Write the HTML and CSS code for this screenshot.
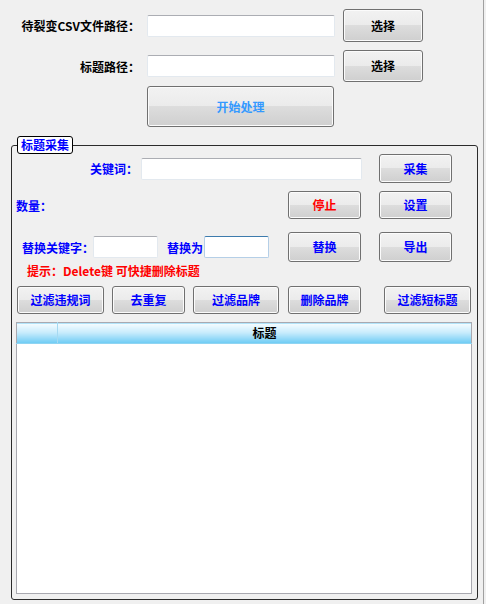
FILE: index.html
```html
<!DOCTYPE html>
<html>

<head>
  <meta charset="utf-8" />
  <title>标题采集</title>
  <link rel="stylesheet" href="styles.css">
</head>

<body>
  <div class="window">
    <div class="top">
      <div class="path-row">
        <label class="path-label">待裂变CSV文件路径：</label>
        <input type="text" class="txt path-input">
        <button class="btn btn-pick">选择</button>
      </div>
      <div class="path-row row2">
        <label class="path-label">标题路径：</label>
        <input type="text" class="txt path-input">
        <button class="btn btn-pick">选择</button>
      </div>
      <div class="start-row">
        <button class="btn btn-start">开始处理</button>
      </div>
    </div>

    <fieldset class="group">
      <legend>标题采集</legend>

      <div class="row row-key">
        <label class="key-label">关键词：</label>
        <input type="text" class="txt key-input">
        <button class="btn btn-sm">采集</button>
      </div>

      <div class="row row-count">
        <span class="count-label">数量：</span>
        <button class="btn btn-sm btn-stop">停止</button>
        <button class="btn btn-sm btn-next">设置</button>
      </div>

      <div class="row row-replace">
        <label class="rep-label">替换关键字：</label>
        <input type="text" class="txt rep-input">
        <label class="rep-to">替换为</label>
        <input type="text" class="txt rep-input focus">
        <button class="btn btn-sm btn-rep">替换</button>
        <button class="btn btn-sm btn-next">导出</button>
      </div>

      <div class="tip">提示：Delete键 可快捷删除标题</div>

      <div class="row row-filter">
        <button class="btn btn-f w87">过滤违规词</button>
        <button class="btn btn-f w73">去重复</button>
        <button class="btn btn-f w86">过滤品牌</button>
        <button class="btn btn-f w73 g9">删除品牌</button>
        <button class="btn btn-f w87 g23">过滤短标题</button>
      </div>

      <table class="grid">
        <thead>
          <tr>
            <th class="col-no"></th>
            <th>标题</th>
          </tr>
        </thead>
        <tbody>
          <tr>
            <td colspan="2"></td>
          </tr>
        </tbody>
      </table>
    </fieldset>
  </div>
</body>

</html>
```

FILE: styles.css
```css
html {
  width: 100%;
  height: 100%;
}

body {
  margin: 0;
  padding: 0;
  background: #f0f0f0;
  font-family: "Noto Sans CJK SC", "Microsoft YaHei", sans-serif;
  font-size: 12px;
  font-weight: bold;
  color: #000;
}

.window {
  width: 483px;
  height: 604px;
  border-right: 1px solid #a0a0a0;
  overflow: hidden;
}

label,
span {
  white-space: nowrap;
}

/* 通用控件 */
.txt {
  box-sizing: border-box;
  height: 22px;
  margin: 0;
  padding: 0 3px;
  background: #fff;
  border: 1px solid #e3e9ef;
  border-top-color: #abadb3;
  border-radius: 2px;
  outline: none;
}

.txt.focus {
  border-color: #b5cfe7;
  border-top-color: #3d7bad;
}

.btn {
  box-sizing: border-box;
  flex-shrink: 0;
  margin: 0;
  padding: 0;
  font: inherit;
  color: #000;
  border: 1px solid #707070;
  border-radius: 3px;
  box-shadow: inset 0 0 0 1px #fbfbfb;
  background: linear-gradient(#f2f2f2 0%, #ebebeb 50%, #dddddd 50%, #cfcfcf 100%);
  line-height: 16px;
  cursor: pointer;
}

/* 顶部路径区 */
.top {
  padding-top: 9px;
}

.path-row {
  display: flex;
  align-items: center;
  height: 33px;
}

.path-row.row2 {
  margin-top: 8px;
  height: 32px;
}

.path-label {
  width: 140px;
  text-align: right;
}

.path-input {
  width: 188px;
  margin-left: 7px;
}

.btn-pick {
  width: 80px;
  height: 100%;
  margin-left: 8px;
}

.start-row {
  margin-top: 4px;
  padding-left: 147px;
}

.btn-start {
  width: 187px;
  height: 41px;
  color: #3399ff;
}

/* 标题采集 */
.group {
  box-sizing: border-box;
  width: 467px;
  margin: 9px 0 0 11px;
  padding: 0 0 5px 0;
  border: 1px solid #2b2b2b;
  border-radius: 3px;
  min-inline-size: 0;
}

.group legend {
  margin-left: 5px;
  padding: 0 3px;
  height: 18px;
  box-sizing: border-box;
  line-height: 16px;
  color: #0000ff;
  background: #fff;
  border: 1px solid #000;
  border-radius: 3px;
}

.row {
  display: flex;
  align-items: center;
  padding-right: 25px;
  color: #0000ff;
}

.row .btn {
  color: #0000ff;
}

.btn-sm {
  width: 73px;
  height: 100%;
}

.row-key {
  height: 29px;
}

.key-label {
  width: 126px;
  text-align: right;
}

.key-input {
  width: 221px;
  margin-left: 3px;
}

.row-key .btn {
  margin-left: 17px;
}

.row-count {
  height: 28px;
  margin-top: 8px;
}

.count-label {
  padding-left: 4px;
}

.row-count .btn-stop {
  margin-left: auto;
  color: #ff0000;
}

.btn-next {
  margin-left: 18px;
}

.row-replace {
  height: 30px;
  margin-top: 13px;
}

.rep-label {
  box-sizing: border-box;
  width: 81px;
  padding-left: 10px;
}

.rep-input {
  width: 65px;
}

.rep-to {
  width: 37px;
  margin-left: 9px;
}

.btn-rep {
  margin-left: 19px;
}

.tip {
  margin-top: 1px;
  padding-left: 15px;
  line-height: 16px;
  color: #ff0000;
}

.row-filter {
  height: 28px;
  margin-top: 7px;
  padding: 0 0 0 5px;
}

.btn-f {
  height: 100%;
  margin-left: 8px;
}

.btn-f:first-child {
  margin-left: 0;
}

.w87 {
  width: 87px;
}

.w86 {
  width: 86px;
}

.w73 {
  width: 73px;
}

.btn-f.g9 {
  margin-left: 9px;
}

.btn-f.g23 {
  margin-left: 23px;
}

/* 列表 */
.grid {
  width: 456px;
  height: 272px;
  margin: 8px 0 0 4px;
  border-collapse: collapse;
  border: 1px solid #a9a9b0;
  background: #fff;
}

.grid th {
  height: 20px;
  padding: 0;
  font-weight: bold;
  text-align: center;
  line-height: 18px;
  background: linear-gradient(#f6fcff 0%, #c9ecfc 45%, #6ccbf4 100%);
  border-bottom: 1px solid #8fd4f2;
}

.grid th.col-no {
  width: 40px;
  border-right: 1px solid #a6d9f1;
}

.grid td {
  padding: 0;
}
```
